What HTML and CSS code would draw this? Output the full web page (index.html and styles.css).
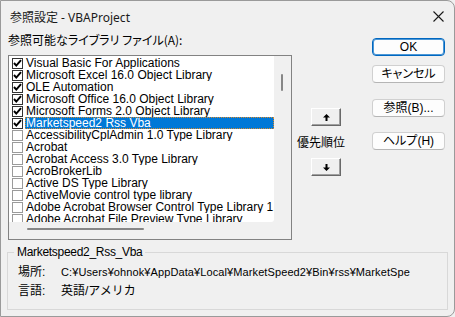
FILE: index.html
```html
<!DOCTYPE html>
<html lang="ja">
<head>
<meta charset="utf-8">
<title>参照設定 - VBAProject</title>
<link rel="stylesheet" href="styles.css">
</head>
<body>
<div class="window">
  <div class="titlebar">
    <span class="title">参照設定 - VBAProject</span>
    <svg class="close" width="11" height="11" viewBox="0 0 11 11"><path d="M0.5 0.5 L10.5 10.5 M10.5 0.5 L0.5 10.5" stroke="#1a1a1a" stroke-width="1.1" fill="none"/></svg>
  </div>
  <div class="body">
    <div class="main">
      <div class="left">
        <div class="label">参照可能なライブラリ ファイル(A):</div>
        <div class="listbox">
          <div class="list-top">
            <div class="items">
              <div class="row"><span class="cb checked"><svg width="9" height="9" viewBox="0 0 9 9"><path d="M1 4 L3.3 6.6 L8 1.2" stroke="#000" stroke-width="2" fill="none"/></svg></span><span class="txt">Visual Basic For Applications</span></div>
              <div class="row"><span class="cb checked"><svg width="9" height="9" viewBox="0 0 9 9"><path d="M1 4 L3.3 6.6 L8 1.2" stroke="#000" stroke-width="2" fill="none"/></svg></span><span class="txt">Microsoft Excel 16.0 Object Library</span></div>
              <div class="row"><span class="cb checked"><svg width="9" height="9" viewBox="0 0 9 9"><path d="M1 4 L3.3 6.6 L8 1.2" stroke="#000" stroke-width="2" fill="none"/></svg></span><span class="txt">OLE Automation</span></div>
              <div class="row"><span class="cb checked"><svg width="9" height="9" viewBox="0 0 9 9"><path d="M1 4 L3.3 6.6 L8 1.2" stroke="#000" stroke-width="2" fill="none"/></svg></span><span class="txt">Microsoft Office 16.0 Object Library</span></div>
              <div class="row"><span class="cb checked"><svg width="9" height="9" viewBox="0 0 9 9"><path d="M1 4 L3.3 6.6 L8 1.2" stroke="#000" stroke-width="2" fill="none"/></svg></span><span class="txt">Microsoft Forms 2.0 Object Library</span></div>
              <div class="row selected"><span class="cb checked"><svg width="9" height="9" viewBox="0 0 9 9"><path d="M1 4 L3.3 6.6 L8 1.2" stroke="#000" stroke-width="2" fill="none"/></svg></span><span class="txt">Marketspeed2 Rss Vba</span></div>
              <div class="row"><span class="cb"></span><span class="txt">AccessibilityCplAdmin 1.0 Type Library</span></div>
              <div class="row"><span class="cb"></span><span class="txt">Acrobat</span></div>
              <div class="row"><span class="cb"></span><span class="txt">Acrobat Access 3.0 Type Library</span></div>
              <div class="row"><span class="cb"></span><span class="txt">AcroBrokerLib</span></div>
              <div class="row"><span class="cb"></span><span class="txt">Active DS Type Library</span></div>
              <div class="row"><span class="cb"></span><span class="txt">ActiveMovie control type library</span></div>
              <div class="row"><span class="cb"></span><span class="txt">Adobe Acrobat Browser Control Type Library 1.0</span></div>
              <div class="row"><span class="cb"></span><span class="txt">Adobe Acrobat File Preview Type Library</span></div>
            </div>
            <div class="vscroll"><div class="vthumb"></div></div>
          </div>
          <div class="hscroll"><div class="hthumb"></div></div>
        </div>
      </div>
      <div class="middle">
        <div class="arrowbtn up"><svg width="7" height="7" viewBox="0 0 7 7"><path d="M3.5 0 L7 3.5 L4.5 3.5 L4.5 7 L2.5 7 L2.5 3.5 L0 3.5 Z" fill="#000"/></svg></div>
        <div class="prio">優先順位</div>
        <div class="arrowbtn down"><svg width="7" height="7" viewBox="0 0 7 7"><path d="M3.5 7 L7 3.5 L4.5 3.5 L4.5 0 L2.5 0 L2.5 3.5 L0 3.5 Z" fill="#000"/></svg></div>
      </div>
      <div class="right">
        <div class="btn default b-ok">OK</div>
        <div class="btn b-cancel">キャンセル</div>
        <div class="btn b-browse">参照(B)...</div>
        <div class="btn b-help">ヘルプ(H)</div>
      </div>
    </div>
    <fieldset class="info">
      <legend>Marketspeed2_Rss_Vba</legend>
      <div class="inforow"><span class="key">場所:</span><span class="val path">C:¥Users¥ohnok¥AppData¥Local¥MarketSpeed2¥Bin¥rss¥MarketSpe</span></div>
      <div class="inforow"><span class="key">言語:</span><span class="val">英語/アメリカ</span></div>
    </fieldset>
  </div>
</div>
</body>
</html>
```

FILE: styles.css
```css
* { box-sizing: border-box; }
html, body { margin: 0; padding: 0; background: #f0f0f0; }
body {
  font-family: "Liberation Sans", "Noto Sans CJK JP", sans-serif;
  font-size: 12px;
  color: #000;
}
.window {
  width: 455px;
  height: 317px;
  background: #f0f0f0;
  border: 1px solid #9a9a9a;
  border-radius: 0 8px 8px 0;
  overflow: hidden;
}
.titlebar {
  height: 29px;
  display: flex;
  align-items: center;
  justify-content: space-between;
  padding: 2px 10px 0 9px;
}
.title {
  font-family: "Noto Sans", "Noto Sans CJK JP", sans-serif;
  font-size: 12px;
  color: #1a1a1a;
}
.close { display: block; }
.body { padding: 0 7px; }
.main { display: flex; height: 210px; }
.left { width: 284px; }
.label {
  margin-top: 3px;
  line-height: 14px;
  height: 14px;
  font-family: "Noto Sans CJK JP", sans-serif;
  font-feature-settings: "palt";
  white-space: nowrap;
}
.listbox {
  margin-top: 8px;
  width: 284px;
  height: 185px;
  border: 1px solid #828282;
  display: flex;
  flex-direction: column;
  background: #f0f0f0;
}
.list-top { display: flex; height: 166px; }
.items {
  width: 265px;
  height: 166px;
  background: #fff;
  overflow: hidden;
  padding-top: 1px;
  border-bottom-right-radius: 3px;
}
.row {
  display: flex;
  height: 12px;
  padding-left: 3px;
  white-space: nowrap;
}
.cb {
  flex: none;
  width: 11px;
  height: 11px;
  margin-top: 1px;
  margin-right: 2px;
  border: 1px solid #9b9b9b;
  background: #fff;
  display: flex;
  align-items: center;
  justify-content: center;
}
.cb.checked { border-color: #333; }
.cb svg { display: block; }
.txt {
  flex: 1;
  overflow: hidden;
  line-height: 12px;
  height: 12px;
  padding-left: 1px;
}
.selected .txt {
  background: #0078d7;
  color: #fff;
  outline: 1px dotted #d88a2c;
  outline-offset: -1px;
}
.vscroll {
  width: 17px;
  background: #f0f0f0;
  padding: 18px 0 0 7px;
}
.vthumb {
  width: 2px;
  height: 17px;
  background: #868686;
  border-radius: 1px;
}
.hscroll {
  height: 17px;
  padding: 6px 0 0 18px;
}
.hthumb {
  width: 117px;
  height: 2px;
  background: #868686;
  border-radius: 1px;
}
.middle { width: 80px; }
.arrowbtn {
  width: 30px;
  height: 18px;
  margin-left: 19px;
  background: #f0f0f0;
  border: 1px solid;
  border-color: #fff #696969 #696969 #fff;
  box-shadow: inset -1px -1px 0 #a0a0a0;
  display: flex;
  align-items: center;
  justify-content: center;
}
.arrowbtn svg { display: block; }
.arrowbtn.up { margin-top: 78px; }
.arrowbtn.down { margin-top: 9px; }
.prio {
  margin-top: 9px;
  margin-left: 5px;
  line-height: 14px;
  height: 14px;
  font-family: "Noto Sans CJK JP", sans-serif;
}
.right { width: 73px; }
.btn {
  width: 73px;
  height: 18px;
  background: #fdfdfd;
  border: 1px solid #d0d0d0;
  border-bottom-color: #b5b5b5;
  border-radius: 4px;
  display: flex;
  align-items: center;
  justify-content: center;
  font-family: "Liberation Sans", "Noto Sans CJK JP", sans-serif;
  font-feature-settings: "palt";
  line-height: 14px;
}
.btn.default {
  border: 1px solid #0067c0;
  box-shadow: inset 0 0 0 1px #4c97d6;
}
.b-ok { margin-top: 8px; }
.b-cancel { margin-top: 9px; }
.b-browse { margin-top: 16px; }
.b-help { margin-top: 15px; }
.info {
  margin: 5px -1px 0;
  width: 441px;
  padding: 4px 6px 8px;
  border: 1px solid #d8d8d8;
}
.info legend {
  padding: 0 3px;
  line-height: 14px;
  height: 14px;
  letter-spacing: -0.3px;
}
.inforow {
  display: flex;
  height: 19px;
  line-height: 19px;
  padding-left: 4px;
  white-space: nowrap;
}
.key { width: 43px; flex: none; }
.val { white-space: nowrap; }
.path {
  font-size: 11px;
  letter-spacing: 0.1px;
}
```
